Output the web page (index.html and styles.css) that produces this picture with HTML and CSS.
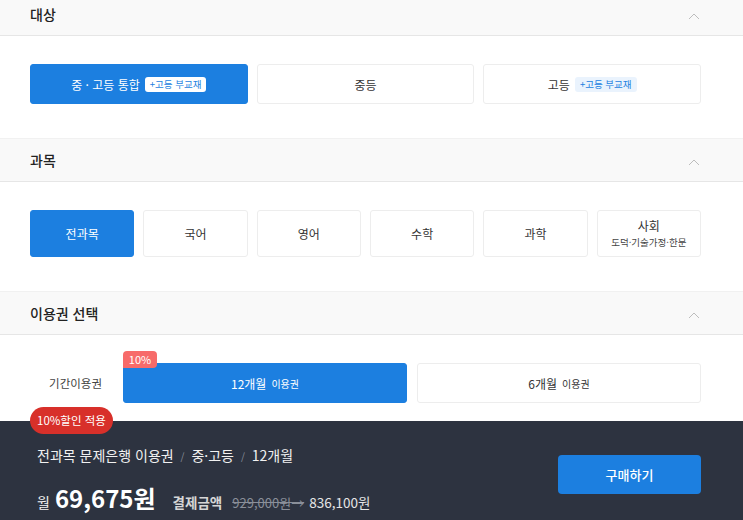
FILE: index.html
```html
<!DOCTYPE html>
<html lang="ko">

<head>
    <meta charset="UTF-8">
    <meta name="viewport" content="width=device-width, initial-scale=1.0">
    <title>문제은행 이용권 구매</title>
    <link rel="stylesheet" href="styles.css">
</head>

<body>
    <div class="page">
        <!-- 대상 -->
        <section class="option-section">
            <div class="section-header">
                <h2>대상</h2>
                <svg class="chevron" width="12" height="7" viewBox="0 0 12 7"><polyline points="1,6 6,1 11,6" fill="none" stroke="#bdbdbd" stroke-width="1"/></svg>
            </div>
            <div class="section-body">
                <div class="choice-grid cols-3">
                    <button class="choice selected">중 · 고등 통합 <span class="tag">+고등 부교재</span></button>
                    <button class="choice">중등</button>
                    <button class="choice">고등 <span class="tag">+고등 부교재</span></button>
                </div>
            </div>
        </section>

        <!-- 과목 -->
        <section class="option-section">
            <div class="section-header">
                <h2>과목</h2>
                <svg class="chevron" width="12" height="7" viewBox="0 0 12 7"><polyline points="1,6 6,1 11,6" fill="none" stroke="#bdbdbd" stroke-width="1"/></svg>
            </div>
            <div class="section-body">
                <div class="choice-grid cols-6 tall">
                    <button class="choice selected">전과목</button>
                    <button class="choice">국어</button>
                    <button class="choice">영어</button>
                    <button class="choice">수학</button>
                    <button class="choice">과학</button>
                    <button class="choice stacked">사회<small>도덕·기술가정·한문</small></button>
                </div>
            </div>
        </section>

        <!-- 이용권 선택 -->
        <section class="option-section">
            <div class="section-header">
                <h2>이용권 선택</h2>
                <svg class="chevron" width="12" height="7" viewBox="0 0 12 7"><polyline points="1,6 6,1 11,6" fill="none" stroke="#bdbdbd" stroke-width="1"/></svg>
            </div>
            <div class="section-body last">
                <div class="period-row">
                    <span class="period-label">기간이용권</span>
                    <div class="choice-grid cols-2">
                        <button class="choice selected has-badge"><span class="rate-badge">10%</span>12개월 <em>이용권</em></button>
                        <button class="choice">6개월 <em>이용권</em></button>
                    </div>
                </div>
            </div>
        </section>

        <!-- 결제 -->
        <footer class="checkout">
            <span class="discount-pill">10%할인 적용</span>
            <div class="summary">
                <p class="summary-title">전과목 문제은행 이용권 <i>/</i> 중·고등 <i>/</i> 12개월</p>
                <p class="summary-price">
                    <span class="per">월</span>
                    <strong>69,675원</strong>
                    <span class="total-label">결제금액</span>
                    <del>929,000원→</del>
                    <span class="total">836,100원</span>
                </p>
            </div>
            <button class="buy-btn">구매하기</button>
        </footer>
    </div>
</body>

</html>
```

FILE: styles.css
```css
body {
    margin: 0;
    padding: 0;
    font-family: "Noto Sans CJK KR", "Noto Sans", sans-serif;
    color: #333;
    background: #fff;
    overflow: hidden;
}

.page {
    margin-top: -8px;
}

p,
h2 {
    margin: 0;
}

.section-header {
    height: 42px;
    display: flex;
    align-items: center;
    justify-content: space-between;
    padding: 0 43px 0 30px;
    background-color: #f9f9f9;
    border-top: 1px solid #f1f1f1;
    border-bottom: 1px solid #e6e6e6;
}

.section-header h2 {
    font-size: 14px;
    font-weight: 500;
    color: #222;
}

.chevron {
    margin-top: 4px;
}

.section-body {
    padding: 28px 42px 34px 30px;
}

.section-body.last {
    padding-bottom: 18px;
}

.choice-grid {
    display: grid;
    gap: 9px;
}

.cols-3 {
    grid-template-columns: repeat(3, 1fr);
}

.cols-6 {
    grid-template-columns: repeat(6, 1fr);
}

.cols-2 {
    grid-template-columns: repeat(2, 1fr);
    gap: 10px;
    flex: 1;
}

.choice {
    height: 40px;
    display: flex;
    align-items: center;
    justify-content: center;
    gap: 5px;
    padding: 0;
    background: #fff;
    border: 1px solid #ededed;
    border-radius: 3px;
    font-family: inherit;
    font-size: 12px;
    color: #333;
    cursor: pointer;
}

.tall .choice {
    height: 47px;
}

.choice.selected {
    background-color: #1c7fe0;
    border-color: #1c7fe0;
    color: #fff;
}

.choice.stacked {
    flex-direction: column;
    gap: 0;
    line-height: 16px;
}

.choice small {
    font-size: 9.5px;
    color: #444;
}

.choice em {
    font-style: normal;
    font-size: 10px;
}

.tag {
    display: inline-block;
    padding: 0 5px;
    line-height: 15px;
    font-size: 9.5px;
    border-radius: 3px;
    background-color: #eaf3fd;
    color: #1c7fe0;
}

.selected .tag {
    background-color: #fff;
}

.period-row {
    display: flex;
    align-items: center;
}

.period-label {
    width: 72px;
    text-align: right;
    padding-right: 21px;
    font-size: 11.5px;
    color: #444;
}

.has-badge {
    position: relative;
}

.rate-badge {
    position: absolute;
    left: -1px;
    top: -13px;
    width: 34px;
    height: 17px;
    line-height: 17px;
    font-size: 11px;
    text-align: center;
    color: #fff;
    background-color: #f76b6a;
    border-radius: 4px 4px 4px 0;
}

.checkout {
    position: relative;
    height: 99px;
    box-sizing: border-box;
    display: flex;
    align-items: flex-start;
    justify-content: space-between;
    padding: 24px 42px 0 37px;
    background-color: #2d3340;
    color: #f1f1f1;
}

.discount-pill {
    position: absolute;
    left: 30px;
    top: -14px;
    height: 27px;
    line-height: 27px;
    padding: 0 7px;
    border-radius: 14px;
    background-color: #d8302a;
    color: #fff;
    font-size: 11.5px;
}

.summary-title {
    font-size: 14px;
    line-height: 20px;
}

.summary-title i {
    font-style: normal;
    font-size: 10px;
    color: #8a8f99;
    margin: 0 3px;
}

.summary-price {
    margin-top: 15px;
    display: flex;
    align-items: baseline;
    line-height: 32px;
}

.summary-price .per {
    font-size: 14px;
    margin-right: 5px;
}

.summary-price strong {
    font-size: 24px;
    font-weight: 700;
    color: #fff;
    margin-right: 17px;
}

.total-label {
    font-size: 13.5px;
    font-weight: 700;
    color: #d6d6d6;
    margin-right: 10px;
}

.summary-price del {
    font-size: 13px;
    color: #8a8f99;
    margin-right: 5px;
}

.total {
    font-size: 13.5px;
    color: #e6e6e6;
}

.buy-btn {
    margin-top: 10px;
    width: 143px;
    height: 39px;
    border: none;
    border-radius: 4px;
    background-color: #1c7fe0;
    color: #fff;
    font-family: inherit;
    font-size: 13px;
    font-weight: 500;
    cursor: pointer;
}
```
